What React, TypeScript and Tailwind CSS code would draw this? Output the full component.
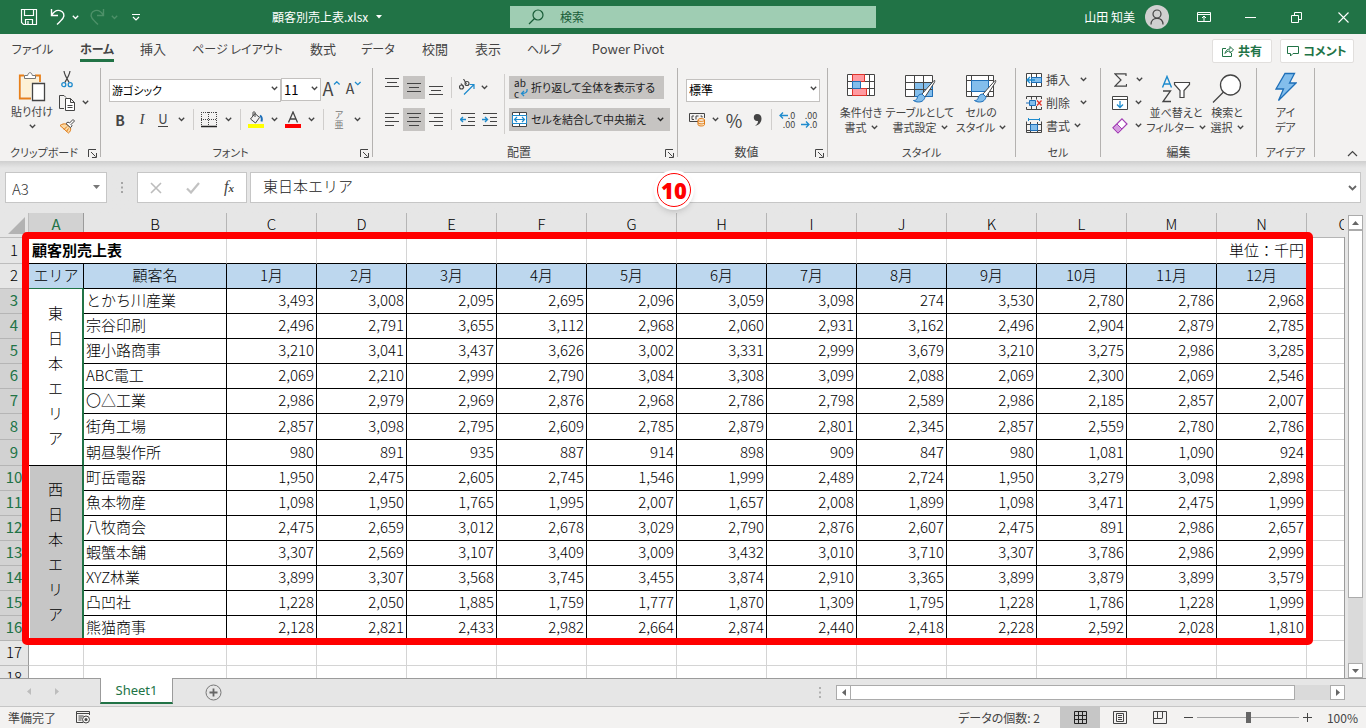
import { ReactNode } from "react"
import clsx from "clsx"

type Kids = { children: ReactNode }

const COLS = ["C", "D", "E", "F", "G", "H", "I", "J", "K", "L", "M", "N"]

const TABS = [
	{ label: "ファイル", width: "w-[65px]" },
	{ label: "ホーム", width: "w-[64px]", active: true },
	{ label: "挿入", width: "w-[48px]", kanji: true },
	{ label: "ページ レイアウト", width: "w-[121px]" },
	{ label: "数式", width: "w-[50px]", kanji: true },
	{ label: "データ", width: "w-[60px]" },
	{ label: "校閲", width: "w-[54px]", kanji: true },
	{ label: "表示", width: "w-[52px]", kanji: true },
	{ label: "ヘルプ", width: "w-[60px]" },
	{ label: "Power Pivot", width: "w-[108px]", kanji: true },
]

const CUSTOMERS: { name: string, sales: number[] }[] = [
	{ name: "とかち川産業", sales: [3493, 3008, 2095, 2695, 2096, 3059, 3098, 274, 3530, 2780, 2786, 2968] },
	{ name: "宗谷印刷", sales: [2496, 2791, 3655, 3112, 2968, 2060, 2931, 3162, 2496, 2904, 2879, 2785] },
	{ name: "狸小路商事", sales: [3210, 3041, 3437, 3626, 3002, 3331, 2999, 3679, 3210, 3275, 2986, 3285] },
	{ name: "ABC電工", sales: [2069, 2210, 2999, 2790, 3084, 3308, 3099, 2088, 2069, 2300, 2069, 2546] },
	{ name: "〇△工業", sales: [2986, 2979, 2969, 2876, 2968, 2786, 2798, 2589, 2986, 2185, 2857, 2007] },
	{ name: "街角工場", sales: [2857, 3098, 2795, 2609, 2785, 2879, 2801, 2345, 2857, 2559, 2780, 2786] },
	{ name: "朝昼製作所", sales: [980, 891, 935, 887, 914, 898, 909, 847, 980, 1081, 1090, 924] },
	{ name: "町岳電器", sales: [1950, 2475, 2605, 2745, 1546, 1999, 2489, 2724, 1950, 3279, 3098, 2898] },
	{ name: "魚本物産", sales: [1098, 1950, 1765, 1995, 2007, 1657, 2008, 1899, 1098, 3471, 2475, 1999] },
	{ name: "八牧商会", sales: [2475, 2659, 3012, 2678, 3029, 2790, 2876, 2607, 2475, 891, 2986, 2657] },
	{ name: "蝦蟹本舗", sales: [3307, 2569, 3107, 3409, 3009, 3432, 3010, 3710, 3307, 3786, 2986, 2999] },
	{ name: "XYZ林業", sales: [3899, 3307, 3568, 3745, 3455, 3874, 2910, 3365, 3899, 3879, 3899, 3579] },
	{ name: "凸凹社", sales: [1228, 2050, 1885, 1759, 1777, 1870, 1309, 1795, 1228, 1786, 1228, 1999] },
	{ name: "熊猫商事", sales: [2128, 2821, 2433, 2982, 2664, 2874, 2440, 2418, 2228, 2592, 2028, 1810] },
]

const Svg = ({ w, h, children, className }: Kids & { w: number, h: number, className?: string }) => (
	<svg width={w} height={h} viewBox={`0 0 ${w} ${h}`} fill="none" stroke="#444" className={clsx("shrink-0", className)} aria-hidden="true">
		{children}
	</svg>
)

const Chevron = ({ className }: { className?: string }) => (
	<Svg w={7} h={5} className={className}><path d="M.8 .8 3.5 3.5 6.2 .8" strokeWidth="1.3" stroke="currentColor" /></Svg>
)

const Tool = ({ label, width = "w-[22px]", on, children }: Kids & { label: string, width?: string, on?: boolean }) => (
	<button type="button" aria-label={label} className={clsx("flex h-[23px] shrink-0 items-center justify-center", width, on && "bg-[#c6c4c2]")}>
		{children}
	</button>
)

const Drop = ({ label, width = "w-4" }: { label: string, width?: string }) => (
	<Tool label={label} width={width}><Chevron /></Tool>
)

const Sep = ({ className = "mx-1" }: { className?: string }) => (
	<div className={clsx("h-[21px] w-px shrink-0 bg-[#d0cecc]", className)} />
)

const Combo = ({ label, value, width, text = "text-xs" }: { label: string, value: string, width: string, text?: string }) => (
	<div className={clsx("relative h-[23px] shrink-0", width)}>
		<select aria-label={label} className={clsx("h-full w-full appearance-none border border-[#c3c1bf] bg-white pl-0.5 text-black", text)}>
			<option>{value}</option>
		</select>
		<Chevron className="pointer-events-none absolute top-[10px] right-[3px]" />
	</div>
)

const Group = ({ label, width, launcher, kana, body, children }: Kids & { label: string, width: string, launcher?: boolean, kana?: boolean, body?: string }) => (
	<section className="flex shrink-0" aria-label={label}>
		<div className={clsx("flex flex-col", width)}>
			<div className={clsx("h-[75px]", body)}>{children}</div>
			<div className={clsx("flex h-[18px] items-center whitespace-nowrap", kana ? "text-[11px]" : "text-xs")}>
				<span className="flex-1 text-center">{label}</span>
				{launcher && (
					<button type="button" aria-label={`${label}の設定`} className="mt-0.5 mr-[3px]">
						<Svg w={9} h={9}><path d="M.5 8V.5H8M3 3l4.5 4.5M8.5 4v4.5H4" /></Svg>
					</button>
				)}
			</div>
		</div>
		<div className="h-[89px] w-px bg-[#b4b2b0]" />
	</section>
)

const BigButton = ({ icon, lines, width, drop }: { icon: ReactNode, lines: string[], width: string, drop?: boolean }) => (
	<button type="button" className={clsx("flex shrink-0 flex-col items-center text-[11px] leading-[15px] whitespace-nowrap", width)}>
		<span className="flex h-[33px] items-center">{icon}</span>
		<span>{lines[0]}</span>
		<span className="flex items-center gap-1">{lines[1]}{drop && <Chevron />}</span>
	</button>
)

// horizontal rules of the alignment icons, given as [x, width] from the top down
const Lines = ({ rows, top = 1 }: { rows: number[][], top?: number }) => (
	<Svg w={14} h={14}>
		{rows.map(([x, w], i) => <path key={i} d={`M${x} ${top + i * 4 + 0.5}h${w}`} />)}
	</Svg>
)

const TitleBar = () => (
	<header className="flex h-[34px] shrink-0 items-center bg-[#217346] text-white">
		<div className="flex w-[272px] shrink-0 items-center pl-[20px]">
			<button type="button" aria-label="上書き保存">
				<Svg w={18} h={18}><path d="M1.5 1.5h15v15h-13l-2-2zM4.500 1.500v6h9v-6M5.500 16.500v-5h7v5M8 13v3" stroke="white" strokeWidth="1.2" /></Svg>
			</button>
			<button type="button" aria-label="元に戻す" className="ml-3 flex items-center gap-1.5">
				<Svg w={16} h={18}><path d="M1.500 1v6.500H8M1.500 7.500C4 3 7 1.800 10 2.600c3.500 1 5 4.500 3 7.500-1 1.500-4 4.500-6 6.400" stroke="white" strokeWidth="1.4" /></Svg>
				<Chevron className="text-white" />
			</button>
			<button type="button" aria-label="やり直し" className="ml-2.5 flex items-center gap-1.5 text-[#4d9068]">
				<Svg w={16} h={18}><path d="M14.500 1v6.500H8M14.500 7.500C12 3 9 1.800 6 2.600c-3.500 1-5 4.500-3 7.500 1 1.500 4 4.500 6 6.400" stroke="currentColor" strokeWidth="1.4" /></Svg>
				<Chevron />
			</button>
			<button type="button" aria-label="クイック アクセス ツール バーのユーザー設定" className="ml-3.5">
				<Svg w={8} h={8}><path d="M0 1.500h8M1 4l3 3 3-3" stroke="white" strokeWidth="1.2" /></Svg>
			</button>
		</div>
		<button type="button" className="flex w-[238px] shrink-0 items-center gap-2 text-xs">
			顧客別売上表.xlsx
			<Svg w={6} h={4}><path d="M0 0h6L3 3.500z" fill="white" stroke="none" /></Svg>
		</button>
		<label className="flex h-[22px] w-[366px] items-center gap-4 bg-[#9fcdb3] pl-[18px]">
			<Svg w={16} h={16}><circle cx="10" cy="6" r="5" stroke="#185c37" strokeWidth="1.2" /><path d="M6.500 9.500 1 15" stroke="#185c37" strokeWidth="1.2" /></Svg>
			<input aria-label="検索" placeholder="検索" className="w-full bg-transparent text-xs outline-none placeholder:text-[#185c37]" />
		</label>
		<div className="ml-auto flex items-center">
			<span className="text-xs">山田 知美</span>
			<button type="button" aria-label="アカウント" className="ml-[10px] flex size-6 items-center justify-center rounded-full bg-[#d0d0d0]">
				<Svg w={16} h={18}><circle cx="8" cy="6" r="4" strokeWidth="1.2" /><path d="M2 16.500c0-4 2.500-6.200 6-6.200s6 2.200 6 6.200" strokeWidth="1.2" /></Svg>
			</button>
			<button type="button" aria-label="リボンの表示オプション" className="flex w-[69px] justify-center">
				<Svg w={14} h={12}><path d="M.5 1.500h13v9H.5zM.5 3.500h13M7 10V5.500M5 7l2-2 2 2" stroke="white" /></Svg>
			</button>
			<button type="button" aria-label="最小化" className="flex w-[24px] justify-center">
				<Svg w={11} h={11}><path d="M0 5.500h11" stroke="white" /></Svg>
			</button>
			<button type="button" aria-label="元のサイズに戻す" className="flex w-[68px] justify-center">
				<Svg w={11} h={11}><path d="M.5 3.500h7v7h-7zM3.500 3V.5h7v7H8" stroke="white" /></Svg>
			</button>
			<button type="button" aria-label="閉じる" className="flex w-[36px] justify-start pl-[8px]">
				<Svg w={11} h={11}><path d="m.5.500 10 10M10.500.500l-10 10" stroke="white" strokeWidth="1.100" /></Svg>
			</button>
		</div>
	</header>
)

const TabBar = () => (
	<nav className="flex h-[34px] shrink-0 items-center">
		{TABS.map(tab => (
			<button
				key={tab.label}
				type="button"
				className={clsx("flex h-full shrink-0 justify-center whitespace-nowrap", tab.width, tab.kanji ? "text-[13px]" : "text-xs", tab.active && "font-bold")}
			>
				<span className={clsx("mt-1 h-6 leading-[22px]", tab.active && "border-b-[3px] border-[#217346]")}>{tab.label}</span>
			</button>
		))}
		<div className="mr-3 ml-auto flex gap-2 text-xs font-bold text-[#217346]">
			<button type="button" className="flex h-6 w-[60px] items-center justify-center gap-1 rounded-xs border border-[#e1dfdd] bg-white">
				<Svg w={12} h={12}><path d="M4 3.500H.5v8h9V8M3 8.500c.5-3 2.500-4.500 5-4.500V1.500L11.500 5 8 8V6C6 6 4 6.800 3 8.500z" stroke="#217346" /></Svg>
				共有
			</button>
			<button type="button" className="flex h-6 w-[74px] items-center justify-center gap-1 rounded-xs border border-[#e1dfdd] bg-white whitespace-nowrap">
				<Svg w={12} h={12}><path d="M.5 1.500h11v7H6L3.500 11V8.500h-3z" stroke="#217346" /></Svg>
				コメント
			</button>
		</div>
	</nav>
)

const Brush = () => (
	<>
		<path d="M30 6.500 18 20l3 3 9-14c1.200-2 1-2.800 0-2.500z" fill="white" stroke="#444" />
		<path d="M18 20c-3 0-4.500 2-5 4.500-.4 1.500-2 2-3.500 2 2.500 2 7.500 2 9.500 0 1.500-1.500 2-3 2-3.500z" fill="#83beec" stroke="#1e6fb8" />
	</>
)

const Ribbon = () => (
	<div className="flex h-[93px] shrink-0">
		<Group label="クリップボード" width="w-[100px]" launcher kana body="flex">
			<button type="button" className="ml-2 flex w-[48px] shrink-0 flex-col items-center pt-1 text-[11px] leading-[15px] whitespace-nowrap">
				<Svg w={28} h={31}>
					<path d="M6 3.500H1.800v23H13M17 3.500h5V10" fill="none" stroke="#e8801a" strokeWidth="1.800" />
					<path d="M3.500 5.500h17V11h-7v14h-10z" fill="#fdf1d6" stroke="none" />
					<path d="M6.500 6.500v-3h3.200C10 1.500 11 .700 12 .700s2 .800 2.300 2.800h3.200v3z" fill="white" stroke="#777" />
					<path d="M14.500 11.500h12v17h-12z" fill="white" strokeWidth="1.300" />
				</Svg>
				<span className="mt-px">貼り付け</span>
				<Chevron className="mt-[5px]" />
			</button>
			<div className="flex flex-col">
				<Tool label="切り取り">
					<Svg w={12} h={17}><path d="M3 0c.5 4 2.500 7 5.200 11.500M9 0c-.5 4-2.500 7-5.200 11.500" strokeWidth="1.200" /><circle cx="2.800" cy="13.700" r="2" stroke="#1e8bcd" strokeWidth="1.300" /><circle cx="9.200" cy="13.700" r="2" stroke="#1e8bcd" strokeWidth="1.300" /></Svg>
				</Tool>
				<div className="flex">
					<Tool label="コピー">
						<Svg w={16} h={16}><path d="M5 13.500H.5V.5H5l2 2" /><path d="M6.500 3.500h5l4 4v8h-9zM11.500 3.500v4h4M8.500 10.500h5M8.500 12.500h5" fill="white" /></Svg>
					</Tool>
					<Drop label="コピーのオプション" width="w-3.5" />
				</div>
				<Tool label="書式のコピー/貼り付け">
					<Svg w={17} h={16}><path d="M1 7.500 9.500 15c2-1.500 2.500-3 2-5.500L7 6C5 5.500 3 6 1 7.500z" fill="#fbd9a5" stroke="#e07b16" /><path d="m5 11.500 3-3M7.500 13.500l2-3" stroke="#e07b16" /><path d="m7 5.500 2-1.500 1.500 1L14 1.500 15.500 3 12 6.500l1 1.200-1.500 2z" fill="white" /></Svg>
				</Tool>
			</div>
		</Group>

		<Group label="フォント" width="w-[271px]" launcher kana body="flex flex-col gap-[9px] pt-2 pl-2">
			<div className="flex">
				<Combo label="フォント名" value="游ゴシック" width="w-[172px]" text="text-[11px]" />
				<Combo label="フォント サイズ" value="11" width="w-[40px]" text="text-[13px]" />
				<Tool label="フォント サイズの拡大"><span className="text-lg leading-5">A</span><Svg w={8} h={14}><path d="m1 3.500 2.800-2.700 2.800 2.700" stroke="#1e8bcd" strokeWidth="1.300" /></Svg></Tool>
				<Tool label="フォント サイズの縮小"><span className="text-sm leading-5">A</span><Svg w={8} h={14}><path d="m1 1 2.800 2.700L6.600 1" stroke="#1e8bcd" strokeWidth="1.300" /></Svg></Tool>
			</div>
			<div className="flex items-center">
				<Tool label="太字"><span className="text-sm leading-[18px] font-bold">B</span></Tool>
				<Tool label="斜体"><span className="font-['Liberation_Serif',serif] text-[15px] italic">I</span></Tool>
				<Tool label="下線" width="w-5"><span className="border-b border-[#444] text-[13px] leading-[14px]">U</span></Tool>
				<Drop label="下線のオプション" />
				<Sep />
				<Tool label="罫線">
					<Svg w={16} h={16}><path d="M.5 0v14M15.500 0v14M7.500 0v14M0 .5h16M0 7.500h16" strokeDasharray="1 1" /><path d="M0 14.500h16" stroke="#222" strokeWidth="1.500" /></Svg>
				</Tool>
				<Drop label="罫線のオプション" />
				<Sep />
				<Tool label="塗りつぶしの色">
					<Svg w={16} h={17}><path d="M7 2.500 2.500 8l5 4 4-5.500zM7 6V1.500c0-1-2-1-2 0V5" /><path d="M12 4.500c2 1.500 2.200 3.500 1.500 6" stroke="#1e6fb8" strokeWidth="2" /><path d="M0 13h16v4H0z" fill="#ff0" stroke="none" /></Svg>
				</Tool>
				<Drop label="塗りつぶしの色のオプション" width="w-3.5" />
				<Tool label="フォントの色" width="w-6">
					<Svg w={16} h={17}><path d="M3.500 11.500 8 1l4.500 10.500M5 8h6" strokeWidth="1.300" /><path d="M0 13h16v4H0z" fill="red" stroke="none" /></Svg>
				</Tool>
				<Drop label="フォントの色のオプション" width="w-3" />
				<Sep className="mx-[6px]" />
				<Tool label="ふりがな" width="w-[18px]"><span className="flex flex-col text-[9px] leading-[10px] text-[#777]"><span>ア</span><span>亜</span></span></Tool>
				<Drop label="ふりがなのオプション" width="w-[18px]" />
			</div>
		</Group>

		<Group label="配置" width="w-[304px]" launcher body="flex pt-2 pl-2">
			<div className="flex w-[123px] shrink-0 flex-col gap-[9px]">
				<div className="flex items-center">
					<Tool label="上揃え"><span className="pb-2"><Lines rows={[[0, 14], [2, 10], [0, 14]]} /></span></Tool>
					<Tool label="上下中央揃え" on><Lines rows={[[0, 14], [2, 10], [0, 14]]} top={2} /></Tool>
					<Tool label="下揃え"><span className="pt-2"><Lines rows={[[0, 14], [2, 10], [0, 14]]} /></span></Tool>
					<Sep />
					<Tool label="方向">
						<Svg w={18} h={17}><g strokeWidth="1.100"><circle cx="3.500" cy="8" r="2" /><path d="m3 4.500 3 4" /><circle cx="9" cy="4.500" r="2" /><path d="m5.500 0 3 5" /></g><path d="M6 15.500 15.500 6M11.500 5.500h4.500V10" stroke="#1e8bcd" strokeWidth="1.200" /></Svg>
					</Tool>
					<Drop label="方向のオプション" width="w-3" />
				</div>
				<div className="flex items-center">
					<Tool label="左揃え"><Lines rows={[[0, 14], [0, 9], [0, 14], [0, 9]]} top={0} /></Tool>
					<Tool label="中央揃え" on><Lines rows={[[0, 14], [2, 10], [0, 14], [2, 10]]} top={0} /></Tool>
					<Tool label="右揃え"><Lines rows={[[0, 14], [5, 9], [0, 14], [5, 9]]} top={0} /></Tool>
					<Sep />
					<Tool label="インデントを減らす"><Svg w={15} h={13}><path d="M1 .5h14M8 4.500h7M8 8.500h7M1 12.500h14" /><path d="M6 6.500H.5M3 4 .5 6.500 3 9" stroke="#1e8bcd" strokeWidth="1.400" /></Svg></Tool>
					<Tool label="インデントを増やす"><Svg w={15} h={13}><path d="M1 .5h14M8 4.500h7M8 8.500h7M1 12.500h14" /><path d="M0 6.500h5.500M3 4l2.500 2.500L3 9" stroke="#1e8bcd" strokeWidth="1.400" /></Svg></Tool>
				</div>
			</div>
			<div className="-mt-0.5 mr-1 h-[60px] w-px shrink-0 bg-[#d0cecc]" />
			<div className="flex flex-col items-start gap-[9px] text-[11px] whitespace-nowrap text-[#222]">
				<button type="button" className="flex h-[23px] w-[155px] items-center gap-[3px] bg-[#c6c4c2] pl-[5px]">
					<span className="relative w-[14px] shrink-0 text-left text-[10px] leading-[11px]">
						<span className="block">ab</span>
						<span className="block">c</span>
						<Svg w={8} h={8} className="absolute right-0 bottom-0.5"><path d="M7 0c.5 3-1 4.500-5.500 4.500M4 2 1.500 4.500 4 7" stroke="#1e8bcd" strokeWidth="1.300" /></Svg>
					</span>
					折り返して全体を表示する
				</button>
				<button type="button" className="flex h-[23px] w-[161px] items-center gap-1 bg-[#c6c4c2] pl-[3px]">
					<Svg w={15} h={15}><path d="M.5.500h14v14H.5zM7.500.500v14" fill="white" /><path d="M.5 3.500h14v8H.5z" fill="white" stroke="#1e8bcd" /><path d="M2.500 7.500h10M5 5 2.500 7.500 5 10M10 5l2.500 2.500L10 10" stroke="#1e8bcd" strokeWidth="1.200" /></Svg>
					セルを結合して中央揃え
					<Chevron className="mr-[6px] ml-auto" />
				</button>
			</div>
		</Group>

		<Group label="数値" width="w-[149px]" launcher body="flex flex-col gap-[9px] pt-2 pl-2">
			<Combo label="表示形式" value="標準" width="w-[134px]" />
			<div className="flex items-center">
				<Tool label="通貨表示形式">
					<Svg w={17} h={15}><path d="M9 9.500H.5v-8h15V6" /><path d="M5 4H3v3.500h2M7 7.500V4h2.500M11.500 4H13v1.500" /><path d="M9 8c0-2 6.500-2 6.500 0v4.500c0 2-6.500 2-6.500 0zM9 8c0 1.800 6.500 1.800 6.500 0M9 10.500c0 1.800 6.500 1.800 6.500 0" fill="#fce3c0" stroke="#e07b16" /></Svg>
				</Tool>
				<Drop label="通貨表示形式のオプション" width="w-3.5" />
				<Tool label="パーセント スタイル" width="w-6"><span className="text-lg leading-5">%</span></Tool>
				<Tool label="桁区切りスタイル">
					<Svg w={9} h={14}><path d="M4 1c3 0 4.500 2 4.500 4.500C8.500 9.500 6 12 2 13c2-1.500 3-3 3-5C2.500 8.500.800 7 .800 4.500.800 2.500 2 1 4 1z" fill="#444" stroke="none" /></Svg>
				</Tool>
				<Sep className="mr-1 ml-[3px]" />
				<Tool label="小数点以下の表示桁数を増やす">
					<span className="flex flex-col items-end text-[9px] leading-[9px]"><span className="flex items-center"><Svg w={9} h={7}><path d="M9 3.500H1M4 .5l-3 3 3 3" stroke="#1e8bcd" strokeWidth="1.300" /></Svg>.0</span><span>.00</span></span>
				</Tool>
				<Tool label="小数点以下の表示桁数を減らす">
					<span className="flex flex-col items-end text-[9px] leading-[9px]"><span>.00</span><span className="flex items-center"><Svg w={9} h={7}><path d="M0 3.500h8M5 .5l3 3-3 3" stroke="#1e8bcd" strokeWidth="1.300" /></Svg>.0</span></span>
				</Tool>
			</div>
		</Group>

		<Group label="スタイル" width="w-[187px]" kana body="flex pt-1 pl-1.5">
			<BigButton drop width="w-[54px]" lines={["条件付き", "書式"]} icon={
				<Svg w={28} h={24} className="mb-2">
					<path d="M.5 1.500h27v21H.5zM.5 8.500h27M.5 15.500h27M5.500 1.500v21M22.500 1.500v21" fill="white" />
					<path d="M5.500 1.500h12v7h-12zM5.500 15.500h14v7h-14z" fill="#ff9aa0" stroke="#e0342b" />
					<path d="M5.500 8.500h8v7h-8z" fill="#83beec" stroke="#1e6fb8" />
				</Svg>
			} />
			<BigButton drop width="w-[64px]" lines={["テーブルとして", "書式設定"]} icon={
				<Svg w={32} h={30}>
					<path d="M1.500 1.500h27v21h-27z" fill="white" />
					<path d="M10.500 8.500h18v14h-18z" fill="#83beec" stroke="#1e6fb8" />
					<path d="M1.500 8.500h27M1.500 15.500h27M10.500 1.500v21M19.500 1.500v21" />
					<Brush />
				</Svg>
			} />
			<BigButton drop width="w-[58px]" lines={["セルの", "スタイル"]} icon={
				<Svg w={32} h={30}>
					<path d="M1.500 1.500h27v21h-27zM1.500 6.500h27M6.500 1.500v21M23.500 1.500v21M1.500 17.500h27" fill="white" />
					<path d="M6.500 6.500h17v11h-17z" fill="#83beec" stroke="#1e6fb8" />
					<Brush />
				</Svg>
			} />
		</Group>

		<Group label="セル" width="w-[84px]" kana body="pl-[10px] text-xs">
			<div className="flex items-center">
				<button type="button" className="flex h-[23px] w-[49px] items-center gap-1">
					<Svg w={16} h={14}><path d="M.5.500h15v13H.5zM5.500.500v13M10.500.500v13" fill="white" /><path d="M5.500 4.500h10v5h-10z" fill="#83beec" stroke="#1e6fb8" /><path d="M9 7H1M4 4 1 7l3 3" stroke="#1e8bcd" strokeWidth="1.400" /></Svg>
					挿入
				</button>
				<Drop label="挿入のオプション" />
			</div>
			<div className="flex items-center">
				<button type="button" className="flex h-[23px] w-[49px] items-center gap-1">
					<Svg w={16} h={14}><path d="M.5 3V.5h15V3M.5 11v2.500h15V11M5.500.500v3M10.500.500v3M5.500 10v3.500M10.500 10v3.500" /><path d="M3.500 4.500h6v5h-6z" fill="#83beec" stroke="#1e6fb8" /><path d="M0 7h3" stroke="#1e6fb8" /><path d="m11 4.500 4.500 5M15.500 4.500l-4.500 5" stroke="#e0342b" strokeWidth="1.300" /></Svg>
					削除
				</button>
				<Drop label="削除のオプション" />
			</div>
			<button type="button" className="flex h-[23px] items-center gap-1">
				<Svg w={16} h={16}><path d="M2.500 1.500h11M2.500 0v3M13.500 0v3" stroke="#1e8bcd" /><path d="M.5 3.500v11h15v-11M.5 6.500h15M.5 12.500h15M4.500 4v11M11.500 4v11" /><path d="M4.500 6.500h7v6h-7z" fill="#83beec" stroke="#1e6fb8" /></Svg>
				書式 <Chevron />
			</button>
		</Group>

		<Group label="編集" width="w-[155px]" body="flex pl-2">
			<div className="flex w-9 shrink-0 flex-col">
				<div className="flex">
					<Tool label="合計"><Svg w={13} h={14}><path d="M12 3V.8H1L7 7l-6 6.200h11.500V11" strokeWidth="1.200" /></Svg></Tool>
					<Drop label="合計のオプション" />
				</div>
				<div className="flex">
					<Tool label="フィル"><Svg w={16} h={14}><path d="M.5.500h15v13H.5zM.5 3.500h15" fill="white" /><path d="M8 5v6.500M5 8.500l3 3 3-3" stroke="#1e8bcd" strokeWidth="1.300" /></Svg></Tool>
					<Drop label="フィルのオプション" width="w-3.5" />
				</div>
				<div className="flex">
					<Tool label="クリア"><Svg w={16} h={16}><path d="M10 .8 15 6l-9 9-5-5.200z" fill="white" stroke="#a33fb5" strokeWidth="1.200" /><path d="M5 6 1 9.800 6 15l4-4z" fill="#d59be0" stroke="#a33fb5" /></Svg></Tool>
					<Drop label="クリアのオプション" width="w-3.5" />
				</div>
			</div>
			<div className="flex pt-1">
				<BigButton drop width="w-[62px]" lines={["並べ替えと", "フィルター"]} icon={
					<Svg w={30} h={28}>
						<path d="M1.500 12.500 6 1.500l4.500 11M3 9h6" stroke="#1e8bcd" strokeWidth="1.400" />
						<path d="M2 16h7.500L2 26.500h8" strokeWidth="1.300" />
						<path d="M13.500 7.500h15v2l-5.500 6v7h-4v-7l-5.500-6z" fill="white" strokeWidth="1.200" />
					</Svg>
				} />
				<BigButton drop width="w-[40px]" lines={["検索と", "選択"]} icon={
					<Svg w={32} h={30}><circle cx="19.500" cy="11" r="10" fill="white" strokeWidth="1.300" /><path d="M12.500 18 2 28.500" strokeWidth="1.300" /></Svg>
				} />
			</div>
		</Group>

		<Group label="アイデア" width="w-[57px]" kana body="flex justify-center pt-1">
			<BigButton width="w-[40px]" lines={["アイ", "デア"]} icon={
				<Svg w={22} h={30} className="mb-1"><path d="M10 1.500h9.500L14.500 11H21L3.500 28.500 8.500 17H1z" fill="#83beec" stroke="#1e6fb8" strokeWidth="1.300" /></Svg>
			} />
		</Group>
		<button type="button" aria-label="リボンを折りたたむ" className="mr-2 mb-1 ml-auto self-end">
			<Svg w={11} h={7}><path d="m1 6 4.500-4.500L10 6" strokeWidth="1.200" /></Svg>
		</button>
	</div>
)

const FormulaBar = () => (
	<div className="relative flex h-[52px] shrink-0 items-start bg-[#e6e6e6] bg-linear-to-b from-[#cfcfcf] to-[#e6e6e6] to-[7px] pt-[11px] pr-[5px] pl-[5px]">
		<div className="relative h-[31px] w-[102px] shrink-0">
			<input aria-label="名前ボックス" defaultValue="A3" className="h-full w-full border border-[#c6c6c6] bg-white pt-0.5 pl-1.5 text-[15px] font-light text-[#333]" />
			<Svg w={7} h={4} className="absolute top-[13px] right-[7px]"><path d="M0 0h7L3.500 4z" fill="#777" stroke="none" /></Svg>
		</div>
		<Svg w={2} h={11} className="mt-2.5 mr-3.5 ml-3.5"><path d="M1 0v11" stroke="#a5a5a5" strokeWidth="2" strokeDasharray="2 2.500" /></Svg>
		<div className="flex h-[31px] w-[110px] shrink-0 items-center justify-around border border-[#c6c6c6] bg-white">
			<button type="button" aria-label="キャンセル"><Svg w={12} h={12}><path d="m1 1 10 10M11 1 1 11" stroke="#bcbcbc" strokeWidth="1.600" /></Svg></button>
			<button type="button" aria-label="入力"><Svg w={14} h={12}><path d="m1 6.500 4 4L13 1" stroke="#c2c2c2" strokeWidth="2.200" /></Svg></button>
			<button type="button" aria-label="関数の挿入" className="font-['Liberation_Serif',serif] text-base leading-4 italic">f<span className="text-[11px] font-bold">x</span></button>
		</div>
		<div className="relative ml-[3px] h-[31px] flex-1">
			<input aria-label="数式バー" defaultValue="東日本エリア" className="h-full w-full border border-[#c6c6c6] bg-white pb-1 pl-3 text-[15px] font-light text-[#222] [font-feature-settings:normal]" />
			<Svg w={9} h={6} className="absolute top-[13px] right-1"><path d="m1 1 3.500 3.500L8 1" stroke="#666" strokeWidth="1.800" /></Svg>
		</div>
		<div className="absolute top-[9px] left-[654px] z-20 size-10 rounded-full bg-white p-[3px] shadow-md">
			<div className="flex size-full items-center justify-center rounded-full border border-[#f00] font-['Open_Sans',sans-serif] text-[22px] font-extrabold text-[#f00]">10</div>
		</div>
	</div>
)

const RowHead = ({ n }: { n: number }) => (
	<th
		scope="row"
		className={clsx(
			"border-r border-b p-0 pb-0.5 text-center",
			n >= 3 && n <= 16 ? "border-r-[#217346] border-b-[#b5b5b5] bg-[#d2d2d2] font-normal text-[#217346]" : "border-r-[#9b9b9b] border-b-[#bdbdbd] bg-[#e6e6e6] font-light text-black",
			n === 1 || n === 8 || n === 9 ? "h-[26px]" : "h-[25px]",
		)}
	>
		{n}
	</th>
)

const Area = ({ text, selected }: { text: string, selected?: boolean }) => (
	<td rowSpan={7} className={clsx("border-r-2 border-b border-r-[#217346] border-b-black p-0 pb-1 text-center align-middle", selected ? "bg-[#c6c6c6] shadow-[inset_1px_0_white]" : "bg-white")}>
		{text.split("").map((ch, i) => <span key={i} className="block leading-[25px]">{ch}</span>)}
	</td>
)

const headCell = "border-r border-b border-black bg-[#bdd7ee] p-0 pb-0.5 text-center font-light"
const gridCell = "border-r border-b border-[#d4d4d4] p-0"

const Sheet = () => (
	<main className="flex min-h-0 flex-1">
		<div className="relative min-w-0 flex-1 overflow-hidden bg-white">
			<table className="w-[1382px] table-fixed border-separate border-spacing-0 text-[15px] leading-[22px] font-light whitespace-nowrap text-black [font-feature-settings:normal]">
				<colgroup>
					<col className="w-[29px]" />
					<col className="w-[55px]" />
					<col className="w-[143px]" />
					{COLS.map(c => <col key={c} className="w-[90px]" />)}
					<col className="w-[75px]" />
				</colgroup>
				<thead>
					<tr className="bg-[#e6e6e6] text-black">
						<th className="h-[25px] border-r border-b border-[#bdbdbd] p-0">
							<Svg w={28} h={24}><path d="M25 4v17H8z" fill="#b3b3b3" stroke="none" /></Svg>
						</th>
						<th scope="col" className="border-r border-b border-[#9b9b9b] bg-[#d2d2d2] p-0 pb-0.5 font-normal text-[#217346]">A</th>
						{["B", ...COLS, "O"].map(c => (
							<th key={c} scope="col" className="border-r border-b border-[#b5b5b5] p-0 pb-0.5 font-light">{c}</th>
						))}
					</tr>
				</thead>
				<tbody>
					<tr>
						<RowHead n={1} />
						<td colSpan={2} className="border-r border-b border-r-[#d4d4d4] border-b-black p-0 pb-0.5 pl-[3px] font-bold">顧客別売上表</td>
						{COLS.map(c => (
							<td key={c} className="border-r border-b border-r-[#d4d4d4] border-b-black p-0 pr-0.5 pb-0.5 text-right">{c === "N" && "単位：千円"}</td>
						))}
						<td className={gridCell} />
					</tr>
					<tr>
						<RowHead n={2} />
						<th scope="col" className={clsx(headCell, "border-b-[#217346]")}>エリア</th>
						<th scope="col" className={headCell}>顧客名</th>
						{COLS.map((c, i) => <th key={c} scope="col" className={headCell}>{i + 1}月</th>)}
						<td className={gridCell} />
					</tr>
					{CUSTOMERS.map((customer, i) => (
						<tr key={customer.name}>
							<RowHead n={i + 3} />
							{i === 0 && <Area text="東日本エリア" />}
							{i === 7 && <Area text="西日本エリア" selected />}
							<td className="border-r border-b border-black p-0 pb-0.5 pl-0.5">{customer.name}</td>
							{customer.sales.map((value, m) => (
								<td key={m} className="border-r border-b border-black p-0 pr-0.5 pb-0.5 text-right">{value.toLocaleString("en-US")}</td>
							))}
							<td className={gridCell} />
						</tr>
					))}
					{[17, 18].map(n => (
						<tr key={n}>
							<RowHead n={n} />
							<td className={gridCell} />
							<td className={gridCell} />
							{COLS.map(c => <td key={c} className={gridCell} />)}
							<td className={gridCell} />
						</tr>
					))}
				</tbody>
			</table>
			{/* red frame round the whole list */}
			<div className="pointer-events-none absolute top-[19px] left-[22px] h-[413px] w-[1291px] rounded-[5px] border-[7px] border-[#f00]" />
		</div>
		<div className="bg-[#e6e6e6] pt-6">
			<div className="h-full w-px bg-[#9b9b9b]" />
		</div>
		<div className="flex w-[21px] flex-col bg-[#e6e6e6] pt-0.5 pr-[3px] pl-[3px]">
			<button type="button" aria-label="上へスクロール" className="flex h-[15px] items-center justify-center border border-[#ababab] bg-white">
				<Svg w={7} h={4}><path d="M0 4h7L3.500 0z" fill="#666" stroke="none" /></Svg>
			</button>
			<div className="flex-1 bg-[#dadada]">
				<div className="h-[85%] border border-[#ababab] bg-white" />
			</div>
			<button type="button" aria-label="下へスクロール" className="flex h-[15px] items-center justify-center border border-[#ababab] bg-white">
				<Svg w={7} h={4}><path d="M0 0h7L3.500 4z" fill="#666" stroke="none" /></Svg>
			</button>
		</div>
	</main>
)

const SheetTabs = () => (
	<div className="flex h-[29px] shrink-0 items-start border-t border-b border-t-[#9b9b9b] border-b-[#c6c6c6] bg-[#e6e6e6]">
		<div className="flex h-6 w-[100px] shrink-0 items-center gap-6 pl-[27px]">
			<button type="button" aria-label="前のシート"><Svg w={4} h={7}><path d="M4 0v7L0 3.500z" fill="#bdbdbd" stroke="none" /></Svg></button>
			<button type="button" aria-label="次のシート"><Svg w={4} h={7}><path d="M0 0v7l4-3.500z" fill="#bdbdbd" stroke="none" /></Svg></button>
		</div>
		<button type="button" className="-mt-px h-[26px] w-[73px] shrink-0 border-r border-b-2 border-l border-r-[#9b9b9b] border-b-[#217346] border-l-[#9b9b9b] bg-white pt-0.5 font-['Noto_Sans',sans-serif] text-[13px] text-[#217346]">Sheet1</button>
		<button type="button" aria-label="新しいシート" className="mt-[5px] ml-8">
			<Svg w={17} h={17}><circle cx="8.500" cy="8.500" r="7.500" stroke="#777" /><path d="M8.500 4.500v8M4.500 8.500h8" stroke="#666" strokeWidth="1.800" /></Svg>
		</button>
		<Svg w={2} h={11} className="mt-2 mr-[15px] ml-auto"><path d="M1 0v11" stroke="#b0b0b0" strokeWidth="2" strokeDasharray="2 2.500" /></Svg>
		<div className="mt-1.5 mr-[21px] flex h-[15px] w-[509px] bg-[#dadada]">
			<button type="button" aria-label="左へスクロール" className="flex w-[15px] items-center justify-center border border-[#ababab] bg-white">
				<Svg w={4} h={7}><path d="M4 0v7L0 3.500z" fill="#666" stroke="none" /></Svg>
			</button>
			<div className="w-[444px] border border-l-0 border-[#ababab] bg-white" />
			<button type="button" aria-label="右へスクロール" className="ml-auto flex w-[15px] items-center justify-center border border-[#ababab] bg-white">
				<Svg w={4} h={7}><path d="M0 0v7l4-3.500z" fill="#666" stroke="none" /></Svg>
			</button>
		</div>
	</div>
)

const StatusBar = () => (
	<footer className="flex h-[21px] shrink-0 items-center text-xs">
		<span className="ml-2">準備完了</span>
		<button type="button" aria-label="マクロの記録" className="ml-5">
			<Svg w={15} h={13}><path d="M7 11.500H.5V.500h13V4M.5 2.500h13M2.500 5h5M2.500 7h3.500M2.500 9h3" /><circle cx="10" cy="8.500" r="3.500" /><circle cx="10" cy="8.500" r="1.500" fill="#444" stroke="none" /></Svg>
		</button>
		<span className="mr-5 ml-auto">データの個数: 2</span>
		<button type="button" aria-label="標準" className="flex h-full w-10 items-center justify-center bg-[#c6c6c6]">
			<Svg w={13} h={13}><path d="M.5.500h12v12H.5zM.5 4.500h12M.5 8.500h12M4.500.500v12M8.500.500v12" stroke="#222" /></Svg>
		</button>
		<button type="button" aria-label="ページ レイアウト" className="flex w-10 justify-center">
			<Svg w={14} h={13}><path d="M.5.500h13v12H.5zM3.500 2.500h7v8h-7zM5 4.500h4M5 6.500h4M5 8.500h4" /></Svg>
		</button>
		<button type="button" aria-label="改ページ プレビュー" className="flex w-10 justify-center">
			<Svg w={14} h={13}><path d="M.5.500h13v12H.5zM4.500.500v7M.5 7.500h8.500M9.500.500v7" /></Svg>
		</button>
		<button type="button" aria-label="縮小" className="ml-1"><Svg w={9} h={9}><path d="M0 4.500h9" /></Svg></button>
		<input
			type="range"
			aria-label="ズーム"
			min={0}
			max={100}
			defaultValue={50}
			className="mx-1 h-3 w-[102px] appearance-none bg-transparent bg-linear-to-r from-[#a5a5a5] to-[#a5a5a5] bg-[length:100%_1px] bg-center bg-no-repeat [&::-webkit-slider-thumb]:h-[11px] [&::-webkit-slider-thumb]:w-[5px] [&::-webkit-slider-thumb]:appearance-none [&::-webkit-slider-thumb]:bg-[#666]"
		/>
		<button type="button" aria-label="拡大"><Svg w={9} h={9}><path d="M0 4.500h9M4.500 0v9" /></Svg></button>
		<span className="mr-2 ml-3 w-[34px] text-right">100%</span>
	</footer>
)

export default function App() {
	return (
		<div className="flex h-screen flex-col overflow-hidden bg-[#f3f2f1] font-['Noto_Sans_CJK_JP',sans-serif] text-[#444] [font-feature-settings:'palt']">
			<TitleBar />
			<TabBar />
			<Ribbon />
			<FormulaBar />
			<Sheet />
			<SheetTabs />
			<StatusBar />
		</div>
	)
}
